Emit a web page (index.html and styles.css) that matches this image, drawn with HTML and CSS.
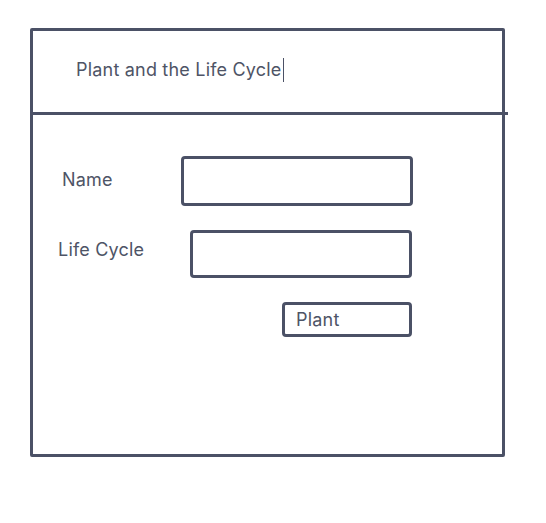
FILE: index.html
```html
<!DOCTYPE html>
<html>
<head>
<meta charset="utf-8">
<link rel="stylesheet" href="styles.css">
</head>
<body>
<div class="frame">
  <div class="header">
    <span class="title">Plant and the Life Cycle</span><span class="caret"></span>
  </div>
  <div class="form">
    <div class="row row-name">
      <span class="label">Name</span>
      <div class="field field-name"></div>
    </div>
    <div class="row row-cycle">
      <span class="label label-cycle">Life Cycle</span>
      <div class="field field-cycle"></div>
    </div>
    <div class="row row-button">
      <div class="button">Plant</div>
    </div>
  </div>
</div>
</body>
</html>
```

FILE: styles.css
```css
* { box-sizing: border-box; }
html, body { background: #ffffff; }
body {
  margin: 0;
  font-family: Inter, "Noto Sans", "Liberation Sans", sans-serif;
  font-size: 18px;
  letter-spacing: 0.2px;
  color: #4e5466;
}
.frame {
  margin: 28px 0 0 30px;
  width: 475px;
  height: 429px;
  border: 3px solid #4b5166;
  border-radius: 2px;
}
.header {
  height: 84px;
  margin-right: -6px;
  border-bottom: 3px solid #4b5166;
  display: flex;
  align-items: center;
  padding-left: 43px;
  padding-bottom: 4px;
}
.title { line-height: 20px; }
.caret {
  display: inline-block;
  width: 1px;
  height: 24px;
  background: #4b5166;
  margin-left: 1px;
}
.form {
  padding: 41px 89px 0 29px;
  display: flex;
  flex-direction: column;
  gap: 24px;
}
.row {
  display: flex;
  align-items: center;
}
.label { line-height: 20px; }
.field, .button {
  border: 3px solid #4b5166;
  border-radius: 4px;
  margin-left: auto;
}
.field-name { width: 232px; height: 50px; }
.row-name .label { margin-top: -3px; }
.label-cycle { margin-left: -4px; margin-top: -8px; }
.field-cycle { width: 222px; height: 48px; margin-right: 1px; }
.button {
  width: 130px;
  height: 35px;
  margin-right: 1px;
  display: flex;
  align-items: center;
  padding-left: 11px;
  line-height: 20px;
}
```
